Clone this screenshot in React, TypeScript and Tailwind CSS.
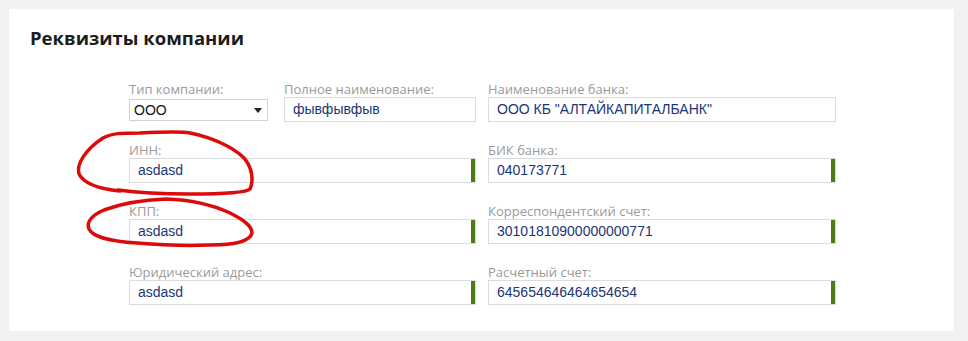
import React from "react";

const labelCls = "block h-[16px] text-[13px] leading-[16px] text-[#9a9a9a] whitespace-nowrap";
const font = { fontFamily: '"Open Sans", "Noto Sans", sans-serif' };

function Field({ label, value, width, bar = false }: { label: string; value: string; width: string; bar?: boolean }) {
  return (
    <div className={width}>
      <span className={labelCls}>{label}</span>
      <div className="relative h-[25px] border border-[#dcdcdc] bg-white flex items-center pl-[8px]">
        <span className="text-[14px] text-[#1d3577]" style={{ fontFamily: '"Liberation Sans", Arial, sans-serif' }}>{value}</span>
        {bar && <div className="absolute right-0 top-0 bottom-0 w-[4px] bg-[#4c7a14]" />}
      </div>
    </div>
  );
}

export default function App() {
  return (
    <div className="relative w-[968px] h-[341px] bg-[#f1f1f1] pt-[9px] pl-[9px]" style={font}>
      <div className="w-[945px] h-[322px] bg-white pl-[21px]">
        <h1 className="pt-[17px] h-[72px] text-[18.5px] leading-[24px] font-bold text-[#1c1c1c]">Реквизиты компании</h1>
        <div className="ml-[99px] flex flex-col gap-[20px]">
          <div className="flex gap-[12px]">
            <div className="w-[347px] flex gap-[16px]">
              <div className="w-[139px]">
                <span className={labelCls}>Тип компании:</span>
                <div className="mt-[2px] h-[22px] border border-[#d2d2d2] bg-white flex items-center justify-between pl-[4px] pr-[5px]">
                  <span className="text-[14px] text-[#111]" style={{ fontFamily: '"Liberation Sans", Arial, sans-serif' }}>ООО</span>
                  <svg width="8" height="5" viewBox="0 0 8 5"><path d="M0 0h8L4 5z" fill="#222" /></svg>
                </div>
              </div>
              <Field label="Полное наименование:" value="фывфывфыв" width="w-[192px]" />
            </div>
            <Field label="Наименование банка:" value={'ООО КБ "АЛТАЙКАПИТАЛБАНК"'} width="w-[348px]" />
          </div>
          <div className="flex gap-[12px]">
            <Field label="ИНН:" value="asdasd" width="w-[347px]" bar />
            <Field label="БИК банка:" value="040173771" width="w-[348px]" bar />
          </div>
          <div className="flex gap-[12px]">
            <Field label="КПП:" value="asdasd" width="w-[347px]" bar />
            <Field label="Корреспондентский счет:" value="30101810900000000771" width="w-[348px]" bar />
          </div>
          <div className="flex gap-[12px]">
            <Field label="Юридический адрес:" value="asdasd" width="w-[347px]" bar />
            <Field label="Расчетный счет:" value="645654646464654654" width="w-[348px]" bar />
          </div>
        </div>
      </div>
      <svg className="absolute left-0 top-0 pointer-events-none" width="968" height="341" viewBox="0 0 968 341">
        <path
          d="M120 191 C100 189 84 184 79 174 C76 164 86 149 103 138 C112 133 122 133 140 133 C160 132 180 131 190 133 C210 137 232 146 244 158 C252 167 254 180 250 189 C246 193 220 194 190 194 C160 194 140 193 118 190"
          fill="none" stroke="#dd0a0a" strokeWidth="3.5" strokeLinecap="round" />
        <path
          d="M166 199 C140 200 120 204 104 210 C92 215 86 222 89 229 C93 237 108 241 137 243 C160 245 190 246 210 245 C235 245 250 241 252 233 C252 226 244 220 230 213 C215 206 195 200 166 199 Z"
          fill="none" stroke="#dd0a0a" strokeWidth="3.5" strokeLinecap="round" />
      </svg>
    </div>
  );
}
